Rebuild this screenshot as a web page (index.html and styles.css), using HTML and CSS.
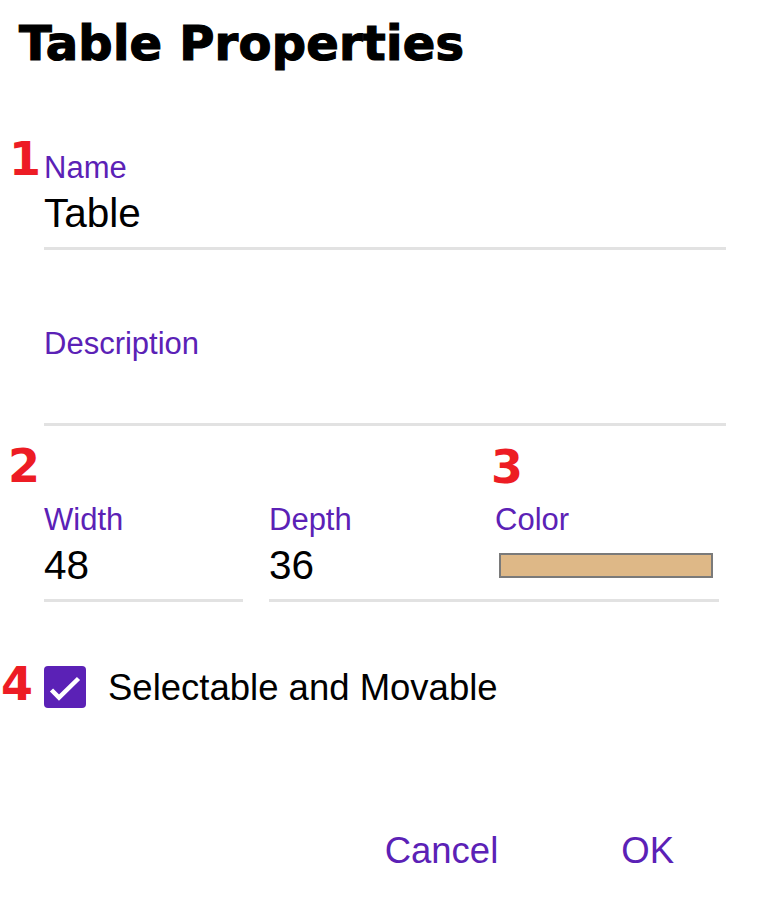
FILE: index.html
```html
<!DOCTYPE html>
<html lang="en">
<head>
<meta charset="utf-8">
<title>Table Properties</title>
<link rel="stylesheet" href="styles.css">
</head>
<body>
<div class="dialog">
  <h1 class="title">Table Properties</h1>
  <div class="form">
    <div class="field">
      <div class="field-label">Name</div>
      <div class="field-value">Table</div>
    </div>
    <div class="field">
      <div class="field-label">Description</div>
      <div class="field-value"></div>
    </div>
    <div class="row">
      <div class="field field-width">
        <div class="field-label">Width</div>
        <div class="field-value">48</div>
      </div>
      <div class="field field-depth">
        <div class="field-label">Depth</div>
        <div class="field-value">36</div>
      </div>
      <div class="field field-color">
        <div class="field-label">Color</div>
        <div class="field-value swatch-wrap"><div class="swatch"></div></div>
      </div>
    </div>
    <div class="check-row">
      <span class="checkbox">
        <svg width="42" height="42" viewBox="0 0 42 42"><polyline points="7.5,24 15,31.5 34.5,12.5" fill="none" stroke="#fff" stroke-width="4.5"/></svg>
      </span>
      <span class="check-label">Selectable and Movable</span>
    </div>
  </div>
  <div class="actions">
    <span class="btn">Cancel</span>
    <span class="btn">OK</span>
  </div>
  <span class="marker m1">1</span>
  <span class="marker m2">2</span>
  <span class="marker m3">3</span>
  <span class="marker m4">4</span>
</div>
</body>
</html>
```
FILE: styles.css
```css
html, body {
  margin: 0;
  padding: 0;
  background: #fff;
}
body {
  font-family: "Liberation Sans", Arial, sans-serif;
  color: #000;
}
.dialog {
  position: relative;
  width: 765px;
  height: 900px;
}
.title {
  margin: 0;
  padding: 15px 0 0 19px;
  font-family: "DejaVu Sans", sans-serif;
  font-weight: bold;
  font-size: 48px;
  line-height: 56px;
  letter-spacing: 0.2px;
  color: #000;
  -webkit-text-stroke: 1.2px #000;
}
.form {
  padding: 80px 39px 0 44px;
}
.field {
  margin-bottom: 77px;
}
.field-label {
  font-size: 31px;
  line-height: 34px;
  color: #5b21b6;
}
.field-value {
  margin-top: 4px;
  font-size: 40.5px;
  line-height: 48px;
  height: 48px;
  padding-bottom: 10px;
  border-bottom: 3px solid #e2e2e2;
}
.row {
  display: flex;
  width: 675px;
}
.row .field {
  margin-bottom: 0;
}
.field-width { width: 199px; margin-right: 26px; }
.field-depth { width: 226px; }
.field-color { width: 224px; }
.swatch-wrap {
  display: flex;
  align-items: center;
}
.swatch {
  margin-left: 4px;
  width: 210px;
  height: 21px;
  background: #deb887;
  border: 2px solid #7a7a7a;
}
.check-row {
  display: flex;
  align-items: center;
  margin-top: 64px;
  height: 42px;
}
.checkbox {
  width: 42px;
  height: 42px;
  border-radius: 4px;
  background: #5b21b6;
  display: block;
}
.checkbox svg { display: block; }
.check-label {
  margin-left: 22px;
  font-size: 36.5px;
  line-height: 42px;
  position: relative;
  top: 1px;
}
.actions {
  display: flex;
  justify-content: flex-end;
  gap: 123px;
  padding-right: 91px;
  margin-top: 122px;
}
.btn {
  font-size: 36.5px;
  line-height: 42px;
  color: #5b21b6;
}
.marker {
  position: absolute;
  width: 40px;
  text-align: center;
  font-family: "DejaVu Sans", sans-serif;
  font-weight: bold;
  font-size: 46px;
  line-height: 46px;
  color: #ed1c24;
}
.m1 { left: 5px; top: 136px; }
.m2 { left: 4px; top: 443px; }
.m3 { left: 487px; top: 444px; }
.m4 { left: -3px; top: 661px; }
```
